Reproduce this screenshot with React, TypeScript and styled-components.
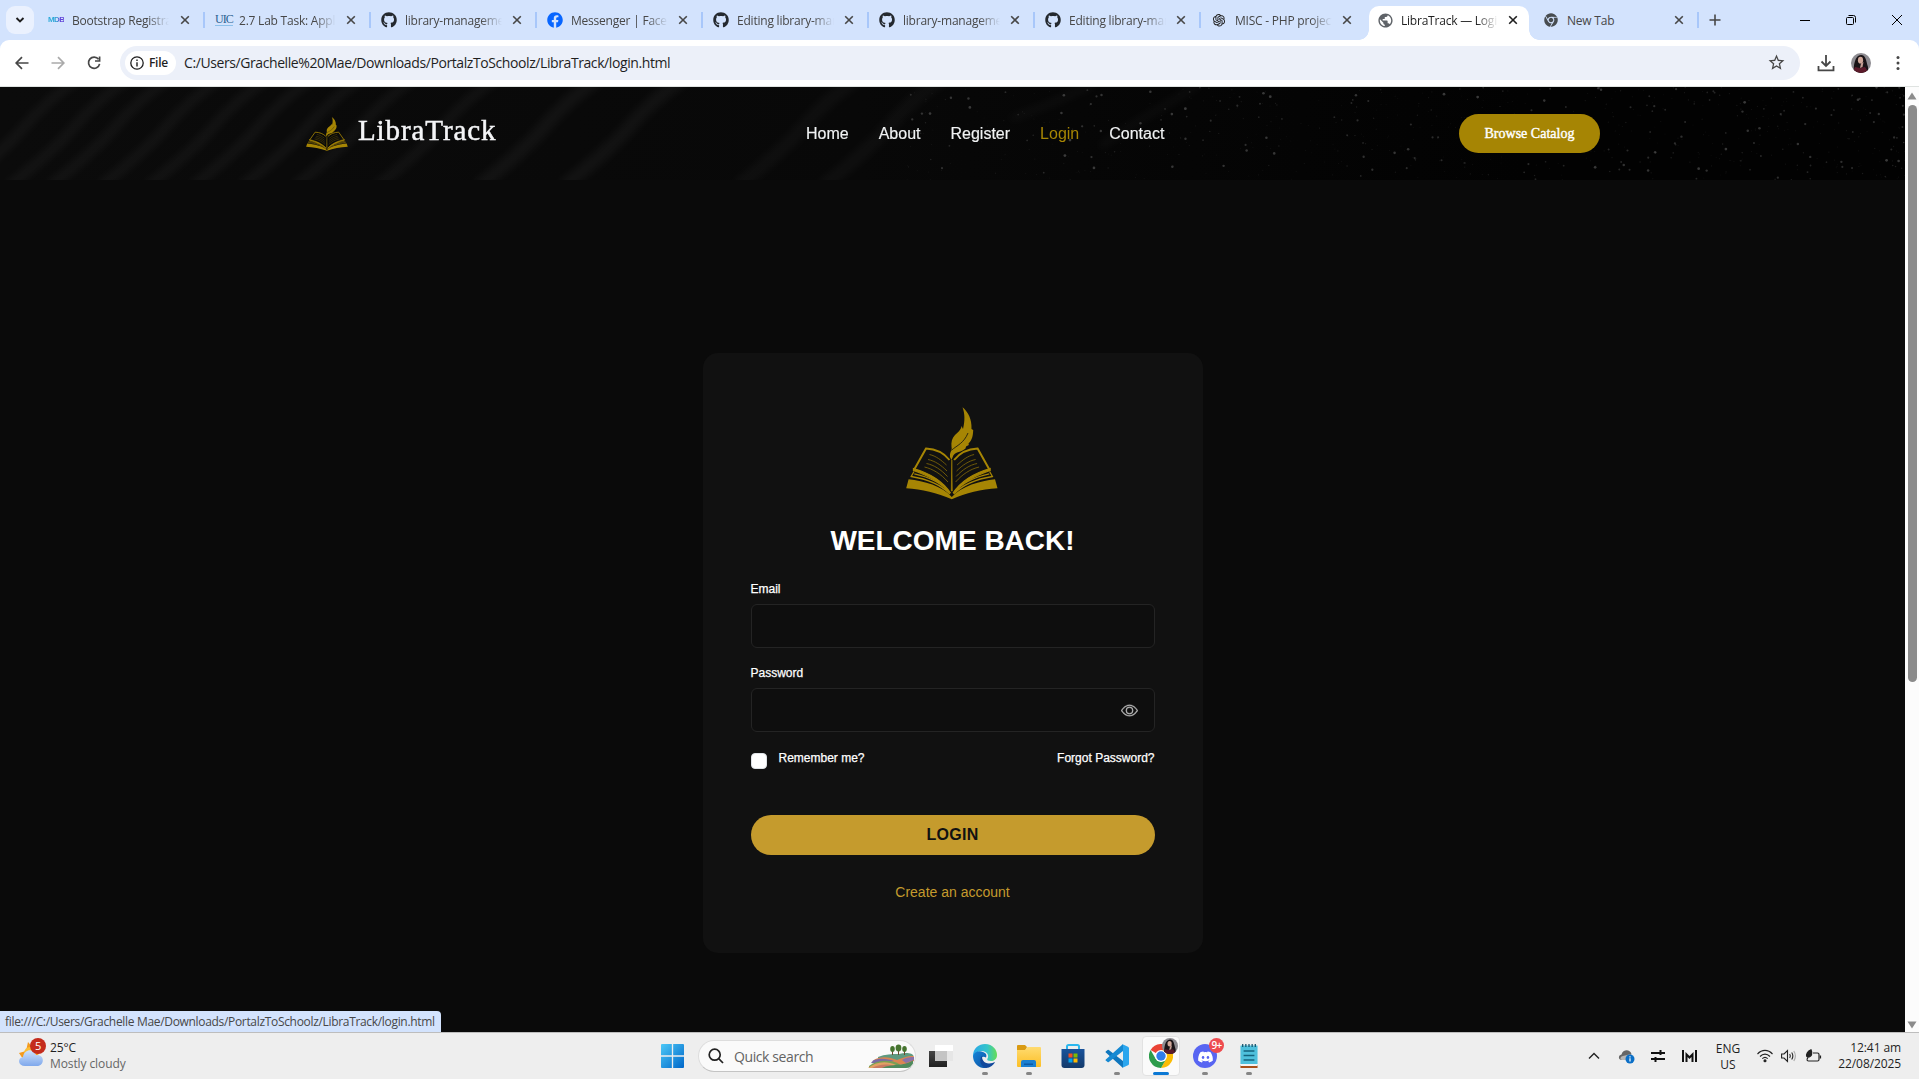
import React from "react";
import styled, { createGlobalStyle, css } from "styled-components";
import { FaGithub, FaFacebook, FaChrome, FaDiscord } from "react-icons/fa";
import { AiOutlineOpenAI } from "react-icons/ai";
import { MdPublic, MdStarBorder } from "react-icons/md";
import { BsEye } from "react-icons/bs";

const ui = `"Open Sans", "Noto Sans", sans-serif`;
const sans = `"Liberation Sans", Arial, sans-serif`;
const serif = `"Liberation Serif", "Times New Roman", serif`;
const gold = "#a68504";

const GlobalStyle = createGlobalStyle`
  * { box-sizing: border-box; }
  body { margin: 0; background: #0a0a0a; overflow: hidden; }
  svg { display: block; flex: none; }
`;

const Screen = styled.div`
  width: 1919px;
  height: 1079px;
  display: grid;
  grid-template-rows: 40px 47px 945px 47px;
  overflow: hidden;
  font-family: ${ui};
`;

/* ---------- Tab strip ---------- */
const TabStrip = styled.div`
  display: flex;
  background: #d3e3fd;
`;
const TabSearch = styled.button`
  width: 28px;
  height: 28px;
  margin: 6px 4px 0 6px;
  padding: 0;
  border: 0;
  border-radius: 9px;
  background: #eaf1fe;
  display: grid;
  place-items: center;
`;
const Tab = styled.div<{ $active?: boolean; $divider?: boolean }>`
  position: relative;
  width: 166px;
  height: 40px;
  padding: 0 13px 0 11px;
  display: flex;
  align-items: center;
  gap: 8px;
  color: ${(p) => (p.$active ? "#1f1f1f" : "#474747")};
  &:nth-child(2) {
    padding-left: 10px;
  }
  ${(p) =>
    p.$divider &&
    css`
      &::after {
        content: "";
        position: absolute;
        right: -1px;
        top: 12px;
        width: 2px;
        height: 16px;
        background: #a8c7fa;
      }
    `}
  ${(p) =>
    p.$active &&
    css`
      width: 160px;
      height: 34px;
      margin: 6px 3px 0 3px;
      padding: 0 10px 6px 8px;
      background: #fff;
      border-radius: 10px 10px 0 0;
      &::before,
      &::after {
        content: "";
        position: absolute;
        bottom: 0;
        width: 10px;
        height: 10px;
      }
      &::before {
        left: -10px;
        background: radial-gradient(circle at 0 0, transparent 9.5px, #fff 10px);
      }
      &::after {
        right: -10px;
        background: radial-gradient(circle at 100% 0, transparent 9.5px, #fff 10px);
      }
    `}
`;
const Favicon = styled.span`
  width: 16px;
  height: 16px;
  display: grid;
  place-items: center;
  flex: none;
`;
const MdbMark = styled.span`
  font: 900 8px/16px ${sans};
  letter-spacing: -0.6px;
  background: linear-gradient(90deg, #2aa9d8 0 35%, #2f8fd0 60%, #6246d8 70%);
  background-clip: text;
  -webkit-background-clip: text;
  color: transparent;
`;
const UicMark = styled.span`
  font: 400 12px/11px ${serif};
  letter-spacing: -1px;
  color: #2a6190;
  border-bottom: 1px solid #8cc0ea;
`;
const TabTitle = styled.span<{ $fade: boolean }>`
  width: 97px;
  padding-top: 1px;
  font-size: 12px;
  line-height: 18px;
  letter-spacing: -0.22px;
  white-space: nowrap;
  overflow: hidden;
  ${(p) => p.$fade && css`mask-image: linear-gradient(90deg, #000 78%, transparent);`}
`;
const CloseSlot = styled.span`
  margin-left: auto;
  width: 12px;
  display: grid;
  place-items: center;
`;
const NewTabButton = styled.span`
  width: 34px;
  display: grid;
  place-items: center;
`;
const WindowControls = styled.div`
  margin: 0 -1px 0 auto;
  display: grid;
  grid-template-columns: repeat(3, 46px);
  place-items: center;
  height: 40px;
`;

/* ---------- Toolbar ---------- */
const ToolbarBack = styled.div`
  background: linear-gradient(#d3e3fd 0 12px, #fff 12px);
`;
const Toolbar = styled.div`
  height: 47px;
  display: flex;
  align-items: center;
  padding: 0 12px 1px 12px;
  background: #fff;
  border-radius: 9px 9px 0 0;
  border-bottom: 1px solid #dfe3e1;
`;
const NavButton = styled.span`
  width: 36px;
  display: flex;
  padding-left: 1px;
`;
const Omnibox = styled.div`
  width: 1680px;
  height: 34px;
  border-radius: 17px;
  background: #ecf0f9;
  display: flex;
  align-items: center;
  padding: 0 14px 0 5px;
`;
const FileChip = styled.span`
  width: 51px;
  height: 24px;
  border-radius: 12px;
  background: #fff;
  display: flex;
  align-items: center;
  gap: 5px;
  padding-left: 5px;
  font-size: 12px;
  font-weight: 600;
  letter-spacing: -0.3px;
  color: #1f1f1f;
`;
const Url = styled.span`
  margin-left: 8px;
  font-size: 14px;
  letter-spacing: -0.41px;
  color: #1f1f1f;
  white-space: nowrap;
`;
const OmniboxEnd = styled.span`
  margin-left: auto;
`;
const ToolbarEnd = styled.div`
  margin-left: auto;
  display: flex;
  align-items: center;
  gap: 16px;
`;

/* ---------- Web page ---------- */
const Viewport = styled.main`
  position: relative;
  display: flex;
  background: #0a0a0a;
`;
const Page = styled.div`
  width: 1905px;
  display: flex;
  flex-direction: column;
  align-items: center;
`;
const SiteHeader = styled.header`
  position: relative;
  width: 100%;
  height: 93px;
  display: grid;
  grid-template-columns: 500px auto 1fr;
  align-items: center;
  padding: 0 305px 0 306px;
  background: linear-gradient(90deg, #0b0b0b, #080808 45%, #020202 80%);
`;
const HeaderTexture = styled.svg`
  position: absolute;
  inset: 0;
`;
const Brand = styled.a`
  position: relative;
  display: flex;
  align-items: flex-start;
  gap: 10px;
  padding-top: 1px;
`;
const BrandName = styled.span`
  margin-top: -2px;
  font: 400 29px/30px ${serif};
  letter-spacing: 0.9px;
  color: #f4f5f7;
  -webkit-text-stroke: 0.5px #f4f5f7;
`;
const Nav = styled.nav`
  position: relative;
  display: flex;
  gap: 30px;
`;
const NavLink = styled.a<{ $current?: boolean }>`
  font: 400 16px/24px ${sans};
  color: ${(p) => (p.$current ? gold : "#f1f3f4")};
  -webkit-text-stroke: ${(p) => (p.$current ? 0 : "0.15px #f1f3f4")};
`;
const CatalogButton = styled.button`
  position: relative;
  justify-self: end;
  width: 141px;
  height: 39px;
  border: 0;
  border-radius: 20px;
  background: ${gold};
  color: #fff;
  font: 400 14px/20px ${serif};
  letter-spacing: 0.02px;
  -webkit-text-stroke: 0.4px #fff;
  padding: 0;
`;
const Card = styled.form`
  width: 500px;
  height: 600px;
  margin-top: 173px;
  padding: 54px 48px 0;
  border-radius: 15px;
  background: #111;
  display: flex;
  flex-direction: column;
  font-family: ${sans};
`;
const CardLogo = styled.div`
  align-self: center;
  margin-right: 2px;
`;
const Title = styled.h1`
  margin: 24px 0 23px;
  text-align: center;
  font: 700 28px/34px ${sans};
  color: #fff;
`;
const Label = styled.label`
  font-size: 12px;
  line-height: 16px;
  color: #fff;
  -webkit-text-stroke: 0.25px #fff;
`;
const Field = styled.div`
  height: 44px;
  margin: 7px 0 17px;
  border: 1px solid #242424;
  border-radius: 6px;
  background: #0e0e0e;
  display: flex;
  align-items: center;
  justify-content: flex-end;
  padding-right: 16px;
`;
const OptionsRow = styled.div`
  display: flex;
  height: 20px;
  align-items: flex-start;
`;
const Checkbox = styled.span`
  width: 16px;
  height: 16px;
  margin: 4px 12px 0 0;
  border-radius: 4px;
  border: 1px solid #dee2e6;
  background: #fff;
`;
const RememberLabel = styled(Label)`
  padding-top: 1px;
`;
const ForgotLink = styled(RememberLabel)`
  margin-left: auto;
`;
const SubmitButton = styled.button`
  height: 40px;
  margin-top: 46px;
  border: 0;
  border-radius: 20px;
  background: #c59b2d;
  color: #111;
  font: 700 16px/20px ${sans};
  letter-spacing: 0.3px;
  padding: 0 0 1px;
`;
const CreateLink = styled.a`
  margin-top: 27px;
  text-align: center;
  font-size: 14px;
  line-height: 20px;
  color: #c59b2d;
`;
const Scrollbar = styled.div`
  width: 14px;
  background: #fcfcfc;
  display: flex;
  flex-direction: column;
  align-items: center;
  padding: 5px 0 3px;
`;
const ScrollThumb = styled.div`
  width: 9px;
  height: 577px;
  margin: 5px 0 auto;
  border-radius: 5px;
  background: #8b8b8b;
`;
const StatusBubble = styled.div`
  position: absolute;
  left: 0;
  bottom: 0;
  width: 441px;
  height: 21px;
  padding-left: 5px;
  border-radius: 0 4px 0 0;
  background: #d3e3fd;
  color: #474747;
  font-size: 12px;
  line-height: 21px;
  letter-spacing: -0.32px;
  white-space: nowrap;
`;

/* ---------- Taskbar ---------- */
const Taskbar = styled.footer`
  display: grid;
  grid-template-columns: 655px 1fr auto;
  background: #eee;
  border-top: 1px solid #bdbdbd;
`;
const Weather = styled.div`
  display: flex;
  gap: 3px;
  padding: 3px 0 0 17px;
  font-size: 12px;
  line-height: 16px;
  letter-spacing: -0.1px;
  color: #666;
`;
const Temperature = styled.div`
  color: #1f1f1f;
  padding-top: 4px;
`;
const Apps = styled.div`
  display: flex;
  align-items: center;
`;
const StartSlot = styled.span`
  width: 43px;
  padding-left: 6px;
`;
const SearchBox = styled.div`
  width: 218px;
  height: 32px;
  margin-right: 3px;
  border-radius: 16px;
  border: 1px solid #ddd;
  border-bottom-color: #c4c4c4;
  background: #fafafa;
  display: flex;
  align-items: center;
  padding: 0 1px 0 9px;
  font-size: 14px;
  letter-spacing: -0.4px;
  color: #636363;
  overflow: hidden;
`;
const SearchText = styled.span`
  margin: 0 auto 0 10px;
`;
const AppSlot = styled.span<{ $focused?: boolean; $running?: boolean }>`
  position: relative;
  width: 38px;
  height: 40px;
  margin: 0 3px;
  border-radius: 4px;
  display: grid;
  place-items: center;
  ${(p) => p.$focused && css`background: #fafafa; border: 1px solid #e2e2e2;`}
  ${(p) =>
    (p.$focused || p.$running) &&
    css`
      &::after {
        content: "";
        position: absolute;
        bottom: ${p.$focused ? 0 : 1}px;
        left: 50%;
        width: ${p.$focused ? 16 : 6}px;
        height: 3px;
        transform: translateX(-50%);
        border-radius: 2px;
        background: ${p.$focused ? "#0b78d4" : "#858585"};
      }
    `}
`;
const CountBadge = styled.span`
  position: absolute;
  right: 0;
  top: 2px;
  width: 15px;
  height: 15px;
  border-radius: 50%;
  background: #ee4b4f;
  color: #fff;
  font-size: 10px;
  font-weight: 600;
  line-height: 15px;
  letter-spacing: -0.6px;
  text-align: center;
`;
const AvatarBadge = styled.span`
  position: absolute;
  right: 1px;
  top: 1px;
`;
const Tray = styled.div`
  display: flex;
  align-items: center;
  padding-right: 18px;
  font-size: 12px;
  line-height: 16px;
  color: #1f1f1f;
`;
const TrayIcon = styled.span<{ $w: number }>`
  width: ${(p) => p.$w}px;
  display: grid;
  place-items: center;
`;
const Language = styled.div`
  width: 40px;
  margin: 1px 5px 0 3px;
  text-align: center;
`;
const Clock = styled.div`
  width: 76px;
  letter-spacing: -0.1px;
  text-align: right;
  white-space: nowrap;
`;

/* ---------- Drawings ---------- */
const BookSide = () => (
  <g fill="none" stroke={gold}>
    <path d="M43.500 53C38 46 30 42 20 41.500L8.500 62" strokeWidth="2" />
    <path d="M7.500 61.500C23 66 36 73 44.500 86C36 75.500 23 69 7.500 63.500Z" strokeWidth="1.300" fill={gold} />
    <path d="M8 64.500L5.200 69.500C21 72 34 77 44 87M8.300 66.800C23 70 35 75 43.500 85.500" strokeWidth="1.300" />
    <g strokeWidth=".9" opacity=".7">
      <path d="M23.500 47.500C30 49 35 53 40.500 58" />
      <path d="M22 52.500C29 54 35 58 41 64" />
      <path d="M20.500 56.500C28 58 35 62.500 41.500 69.500" />
      <path d="M18.500 60C27 62 35 67 42 75" />
    </g>
  </g>
);

const BookLogo = ({ width, height }: { width: number; height: number }) => (
  <svg width={width} height={height} viewBox="0 0 92 93" preserveAspectRatio="none">
    <path
      fill={gold}
      d="M2.600 72.300C18 74 36 79 45.800 90C56 79 74 74 89 72.300L91.500 81.300C75 82 60 86 45.800 92.300C31 86 16 82.500 .2 81.300Z"
    />
    <BookSide />
    <g transform="matrix(-1 0 0 1 91.6 0)">
      <BookSide />
    </g>
    <path d="M45.800 53L46.300 84H45.300Z" stroke={gold} strokeWidth=".6" fill={gold} />
    <path
      fill={gold}
      d="M56.500 .3C62 5 66 12 65.500 22L67.200 23C67 31 65 34 62.500 36.500L62.800 38L60 39.500L59.500 41.500C55 45.500 50 44.500 47.300 48.500L45.500 53L44 50C43.500 45 46.500 43.500 45.500 40C45 35 46 31 49 28C52 25 55 23 55.500 19L57 22C59 14 59 7 56.500 .3Z"
    />
    <path d="M45.500 43.200C51 38.500 58 36 62 26" stroke="#111" strokeWidth=".8" fill="none" />
  </svg>
);

const Avatar = ({ w, h }: { w: number; h: number }) => (
  <svg width={w} height={h} viewBox="0 0 20 20" preserveAspectRatio="none">
    <clipPath id={`face${w}`}><circle cx="10" cy="10" r="10" /></clipPath>
    <g clipPath={`url(#face${w})`}>
      <path fill="#8d8b90" d="M0 0H20V20H0Z" />
      <path fill="#191316" d="M3 20C2 13 4 2 10 2C15 2 15 8 17 14L17 20Z" />
      <ellipse cx="9.500" cy="7.200" rx="2.600" ry="3.400" fill="#cfa799" />
      <path fill="#5b1a2a" d="M1 20L4 14L9 15L14 14L18 20Z" />
      <path fill="#c69f94" d="M10 10.500L12.500 9L11.500 14L9 15Z" />
    </g>
  </svg>
);

const CloseIcon = ({ dark }: { dark?: boolean }) => (
  <svg width="10" height="10" viewBox="0 0 10 10">
    <path d="M1.200 1.200L8.800 8.800M8.800 1.200L1.200 8.800" stroke={dark ? "#1f1f1f" : "#474747"} strokeWidth="1.600" />
  </svg>
);

const stripes = [-34, 16, 57, 108, 155, 200, 249, 302, 384, 486, 571, 745, 830];
const specks = Array.from({ length: 700 }, (_, i) => {
  const a = Math.abs(Math.sin(i * 12.9898 + 4.1) * 43758.5453) % 1;
  const b = Math.abs(Math.sin(i * 78.233 + 1.7) * 24634.6345) % 1;
  const c = Math.abs(Math.sin(i * 39.425 + 9.2) * 14375.8512) % 1;
  const c4 = c * c * c * c;
  return { x: 1905 - Math.pow(a, 1.4) * 1000, y: b * 93, r: 0.5 + c4 * 0.9, o: 0.06 + c4 * 0.16 };
});

const Texture = () => (
  <HeaderTexture width="1905" height="93">
    <defs>
      <filter id="soft" x="-20%" y="-20%" width="140%" height="140%">
        <feGaussianBlur stdDeviation="4" />
      </filter>
    </defs>
    <g filter="url(#soft)" stroke="#fff" fill="none">
      {stripes.map((x, i) => (
        <path
          key={x}
          d={`M${x - 8} 100Q${x + 40} 62 ${x + 60} 38T${x + 112} -8`}
          strokeWidth={i > 8 ? 14 : 10}
          opacity={i > 10 ? 0.03 : 0.045}
        />
      ))}
      <path d="M1010 32C1050 18 1070 8 1095 -4M1100 60C1140 30 1170 18 1200 -4" strokeWidth="8" opacity=".03" />
    </g>
    {specks.map((s, i) => (
      <circle key={i} cx={s.x} cy={s.y} r={s.r} fill="#fff" opacity={s.o} />
    ))}
  </HeaderTexture>
);

const WeatherIcon = () => (
  <svg width="30" height="34" viewBox="0 0 30 34">
    <path fill="#f49a1c" d="M2 17L9 15L11 6L17 13L22 18L8 26Z" />
    <circle cx="13" cy="17" r="6" fill="#fbbd35" />
    <linearGradient id="cloud" x2="0" y2="1"><stop stopColor="#cfe2fb" /><stop offset="1" stopColor="#7fa8ec" /></linearGradient>
    <path fill="url(#cloud)" d="M8 30C1 30 0 22 6 21C7 13 17 12 19 19C28 18 28 30 20 30Z" />
    <circle cx="21" cy="10" r="8" fill="#c42b1c" />
    <text x="21" y="14" textAnchor="middle" fontSize="11" fill="#fff" fontFamily="Open Sans">5</text>
  </svg>
);

const StartIcon = () => (
  <svg width="23" height="24" viewBox="0 0 24 24" preserveAspectRatio="none">
    <linearGradient id="win" x2="1" y2="1"><stop stopColor="#4cc8f7" /><stop offset="1" stopColor="#0067c9" /></linearGradient>
    <path fill="url(#win)" d="M0 1Q0 0 1 0H11.300V11.300H0ZM12.700 0H23Q24 0 24 1V11.300H12.700ZM0 12.700H11.300V24H1Q0 24 0 23ZM12.700 12.700H24V23Q24 24 23 24H12.700Z" />
  </svg>
);

const Landscape = () => (
  <svg width="46" height="26" viewBox="0 0 46 26">
    <path fill="#5f9a80" d="M10 14C17 11 24 11 31 11C38 9 45 10 45.500 13L40 20L10 20Z" />
    <path fill="#d98552" d="M5 17.500C12 12.500 22 14 29 17C36 14 43 12 46 13.500V18L39 22L12 21Z" />
    <path fill="#7a6aa5" d="M5 17.500C12 14.500 20 16 26 18L18 20L3 20Z" />
    <path fill="#8a72a8" d="M34 17C39 14 43 14 46 14V17L38 20Z" />
    <path fill="#79a055" d="M1 23C10 16 24 17 31 21L38 25H1Z" />
    <path fill="#e2a165" d="M0 25C7 19 18 17 28 22L33 25Z" />
    <path fill="#c97b62" d="M4 25C10 22 18 20 26 23L30 25Z" />
    <path fill="#4f8a5c" d="M14 25C24 20 34 24 45 17.500V22Q43 25 38 25Z" />
    <path stroke="#6b4a2b" d="M24.500 6V12M30.500 5V12M36.500 6V12" />
    <g fill="#46742f">
      <ellipse cx="24.500" cy="6" rx="2.300" ry="3" />
      <ellipse cx="30.500" cy="5" rx="2.900" ry="3.400" />
      <ellipse cx="36.500" cy="6" rx="2.300" ry="3" />
    </g>
  </svg>
);

const TaskViewIcon = () => (
  <svg width="24" height="24" viewBox="0 0 24 24">
    <linearGradient id="tv" x2="0" y2="1"><stop stopColor="#454545" /><stop offset="1" stopColor="#202020" /></linearGradient>
    <path fill="url(#tv)" d="M0 7H18V23H0Z" />
    <path fill="#fff" d="M6 1H24V17H6Z" opacity=".95" />
    <path fill="#c4c4c4" d="M6 7H18V17H6Z" />
    <path fill="#e6e6e6" d="M18 7H24V17H18Z" />
  </svg>
);

const EdgeIcon = () => (
  <svg width="24" height="24" viewBox="0 0 24 24">
    <linearGradient id="e1" x2="1"><stop stopColor="#2aa7e8" /><stop offset=".6" stopColor="#35c5c9" /><stop offset="1" stopColor="#66dd55" /></linearGradient>
    <linearGradient id="e2" x2="1" y2="1"><stop stopColor="#1684d8" /><stop offset="1" stopColor="#0c4fa0" /></linearGradient>
    <path fill="url(#e1)" d="M0 12C0 4 6 0 12 0C20 0 24 6 24 11C24 15 21 17 18 17C15 17 13.800 16 14.300 15C17 11 13 7 9 7C4 7 1 10 0 14Z" />
    <path fill="url(#e2)" d="M0 12C1 8 6 6 10 8C13 9 14 11 13 13.500C8 11 6 16 9 20C11 23 14 24 15 23.600C6 26 0 19 0 12Z" />
    <path fill="#11489b" d="M9.500 11.500C8 15 11 19.500 16 19.500C19 19.500 20 18.500 22 18C21 20.500 17 24 13 24C7 22 5 15 9.500 11.500Z" />
  </svg>
);

const FolderIcon = () => (
  <svg width="24" height="24" viewBox="0 0 24 24">
    <path fill="#d99a12" d="M0 2Q0 1 1 1H8L10 3L8 7H0Z" />
    <linearGradient id="fol" x2="0" y2="1"><stop stopColor="#ffdb70" /><stop offset="1" stopColor="#fcbf26" /></linearGradient>
    <path fill="url(#fol)" d="M0 6H8L10.500 3H23Q24 3 24 4V22Q24 23 23 23H1Q0 23 0 22Z" />
    <path fill="#1b7fd0" d="M4 23V18Q4 16 6 16H17Q19 16 19 18V23Z" />
    <path fill="#0b5aa6" d="M7 19.500H16V21H7Z" />
  </svg>
);

const StoreIcon = () => (
  <svg width="24" height="24" viewBox="0 0 24 24">
    <path fill="none" stroke="#2bb7ee" strokeWidth="2" d="M6 6V2.500Q6 1 7.500 1H16.500Q18 1 18 2.500V6" />
    <linearGradient id="sto" x2="0" y2="1"><stop stopColor="#19539b" /><stop offset="1" stopColor="#133a6b" /></linearGradient>
    <path fill="url(#sto)" d="M.5 5H23.500V21Q23.500 24 20.500 24H3.500Q.5 24 .5 21Z" />
    <path fill="#f25022" d="M7.500 9.500H11.500V13.500H7.500Z" />
    <path fill="#7fba00" d="M12.500 9.500H16.500V13.500H12.500Z" />
    <path fill="#00a4ef" d="M7.500 14.500H11.500V18.500H7.500Z" />
    <path fill="#ffb900" d="M12.500 14.500H16.500V18.500H12.500Z" />
  </svg>
);

const CodeIcon = () => (
  <svg width="24" height="24" viewBox="0 0 24 24">
    <path fill="#0f76bd" d="M1 7.200L2.600 5.900Q3.200 5.500 3.800 6L18 17V24L.8 8.600Q0 7.900 1 7.200Z" />
    <path fill="#1689d2" d="M1 16.800L2.600 18.100Q3.200 18.500 3.800 18L18 7V0L.8 15.400Q0 16.100 1 16.800Z" />
    <path fill="#2ba6ee" d="M17.500 .2L23 2.700Q24 3.200 24 4.200V19.800Q24 20.800 23 21.300L17.500 23.800Q18 23.500 18 22.500V1.500Q18 .5 17.500 .2Z" />
  </svg>
);

const ChromeIcon = () => (
  <svg width="24" height="24" viewBox="0 0 24 24">
    <path fill="#ea4335" d="M12 12L1.600 6A12 12 0 0 1 22.400 6Z" />
    <path fill="#fbbc04" d="M12 6H22.400A12 12 0 0 1 12 24L17.200 15Z" />
    <path fill="#2d9c4b" d="M1.600 6L6.800 15L12 18L17.200 15L12 24A12 12 0 0 1 1.600 6Z" />
    <circle cx="12" cy="12" r="6" fill="#fff" />
    <circle cx="12" cy="12" r="4.700" fill="#2f7de9" />
  </svg>
);

const DiscordIcon = () => (
  <svg width="24" height="24" viewBox="0 0 24 24">
    <circle cx="12" cy="12" r="12" fill="#5865f2" />
    <FaDiscord x="4.500" y="5" width="15" height="14" color="#fff" />
  </svg>
);

const NotepadIcon = () => (
  <svg width="18" height="24" viewBox="0 0 20 24" preserveAspectRatio="none">
    <path fill="#a9501a" d="M.5 21H19.500V24H.5Z" />
    <path fill="#f3f3f3" d="M.5 19H19.500V22H.5Z" />
    <path fill="#4fc0dc" d="M1 1.500H19Q19.500 1.500 19.500 2.500V20H.5V2.500Q.5 1.500 1 1.500Z" />
    <path stroke="#15526b" strokeWidth="1.400" d="M3 0V3M6.500 0V3M10 0V3M13.500 0V3M17 0V3" />
    <path stroke="#14637e" strokeWidth="1.500" d="M4 7H16M4 11.500H16M4 16H16" />
  </svg>
);

const tabs = [
  { icon: <MdbMark>MDB</MdbMark>, title: "Bootstrap Registration" },
  { icon: <UicMark>UIC</UicMark>, title: "2.7 Lab Task: Applied" },
  { icon: <FaGithub size={16} color="#24292f" />, title: "library-management" },
  { icon: <FaFacebook size={16} color="#0866ff" />, title: "Messenger | Facebook" },
  { icon: <FaGithub size={16} color="#24292f" />, title: "Editing library-mana" },
  { icon: <FaGithub size={16} color="#24292f" />, title: "library-management" },
  { icon: <FaGithub size={16} color="#24292f" />, title: "Editing library-mana" },
  { icon: <AiOutlineOpenAI size={16} color="#222" />, title: "MISC - PHP project" },
  { icon: <MdPublic size={17} color="#5f6368" />, title: "LibraTrack — Login", active: true },
  { icon: <FaChrome size={14} color="#474c50" />, title: "New Tab" },
];

export default function App() {
  return (
    <Screen>
      <GlobalStyle />
      <TabStrip>
        <TabSearch>
          <svg width="10" height="8" viewBox="0 0 10 8"><path d="M1.500 2L5 5.500L8.500 2" fill="none" stroke="#1f1f1f" strokeWidth="1.900" /></svg>
        </TabSearch>
        {tabs.map((t, i) => (
          <Tab key={i} $active={t.active} $divider={i !== 7 && i !== 8}>
            <Favicon>{t.icon}</Favicon>
            <TabTitle $fade={t.title !== "New Tab"}>{t.title}</TabTitle>
            <CloseSlot><CloseIcon dark={t.active} /></CloseSlot>
          </Tab>
        ))}
        <NewTabButton>
          <svg width="12" height="12" viewBox="0 0 12 12"><path d="M6 .5V11.500M.5 6H11.500" stroke="#474747" strokeWidth="1.600" /></svg>
        </NewTabButton>
        <WindowControls>
          <svg width="10" height="10"><path d="M0 5.500H10" stroke="#000" /></svg>
          <svg width="10" height="10" fill="none" stroke="#000">
            <rect x=".5" y="2.500" width="7" height="7" rx="1" />
            <path d="M2.500 .5H7.500Q9.500 .5 9.500 2.500V7.500" />
          </svg>
          <svg width="10" height="10"><path d="M0 0L10 10M10 0L0 10" stroke="#000" /></svg>
        </WindowControls>
      </TabStrip>

      <ToolbarBack>
        <Toolbar>
          <NavButton>
            <svg width="18" height="18" viewBox="0 0 18 18"><path d="M15.500 9H3.500M9 3.200L3.200 9L9 14.800" fill="none" stroke="#474747" strokeWidth="1.700" /></svg>
          </NavButton>
          <NavButton>
            <svg width="18" height="18" viewBox="0 0 18 18"><path d="M2.500 9H14.500M9 3.200L14.800 9L9 14.800" fill="none" stroke="#aaa" strokeWidth="1.700" /></svg>
          </NavButton>
          <NavButton>
            <svg width="18" height="18" viewBox="0 0 18 18">
              <path d="M13.600 5.300A5.600 5.600 0 1 0 14.600 9.800" fill="none" stroke="#474747" strokeWidth="1.700" />
              <path d="M14.600 2.500V7H10" fill="none" stroke="#474747" strokeWidth="1.700" />
            </svg>
          </NavButton>
          <Omnibox>
            <FileChip>
              <svg width="14" height="14" viewBox="0 0 14 14">
                <circle cx="7" cy="7" r="6.200" fill="none" stroke="#1f1f1f" strokeWidth="1.300" />
                <path d="M7 6.300V10.500M7 3.500V5" stroke="#1f1f1f" strokeWidth="1.400" />
              </svg>
              File
            </FileChip>
            <Url>C:/Users/Grachelle%20Mae/Downloads/PortalzToSchoolz/LibraTrack/login.html</Url>
            <OmniboxEnd><MdStarBorder size={19} color="#474747" /></OmniboxEnd>
          </Omnibox>
          <ToolbarEnd>
            <svg width="18" height="18" viewBox="0 0 18 18">
              <path d="M9 1V11.500M4.500 7.500L9 12L13.500 7.500M1.500 12V16.300H16.500V12" fill="none" stroke="#474747" strokeWidth="1.800" />
            </svg>
            <Avatar w={20} h={20} />
            <svg width="20" height="16" viewBox="0 0 20 16" fill="#474747">
              <circle cx="11" cy="2.500" r="1.500" /><circle cx="11" cy="8" r="1.500" /><circle cx="11" cy="13.500" r="1.500" />
            </svg>
          </ToolbarEnd>
        </Toolbar>
      </ToolbarBack>

      <Viewport>
        <Page>
          <SiteHeader>
            <Texture />
            <Brand>
              <BookLogo width={42} height={34} />
              <BrandName>LibraTrack</BrandName>
            </Brand>
            <Nav>
              {["Home", "About", "Register", "Login", "Contact"].map((n) => (
                <NavLink key={n} $current={n === "Login"}>{n}</NavLink>
              ))}
            </Nav>
            <CatalogButton>Browse Catalog</CatalogButton>
          </SiteHeader>
          <Card>
            <CardLogo><BookLogo width={92} height={93} /></CardLogo>
            <Title>WELCOME BACK!</Title>
            <Label>Email</Label>
            <Field />
            <Label>Password</Label>
            <Field><BsEye size={17} color="#b5b5b5" stroke="#b5b5b5" strokeWidth={0.25} /></Field>
            <OptionsRow>
              <Checkbox />
              <RememberLabel>Remember me?</RememberLabel>
              <ForgotLink>Forgot Password?</ForgotLink>
            </OptionsRow>
            <SubmitButton type="button">LOGIN</SubmitButton>
            <CreateLink>Create an account</CreateLink>
          </Card>
        </Page>
        <Scrollbar>
          <svg width="10" height="8"><path d="M5 .5L9.500 7.500H.5Z" fill="#8b8b8b" /></svg>
          <ScrollThumb />
          <svg width="10" height="8"><path d="M5 7.500L9.500 .5H.5Z" fill="#8b8b8b" /></svg>
        </Scrollbar>
        <StatusBubble>file:///C:/Users/Grachelle Mae/Downloads/PortalzToSchoolz/LibraTrack/login.html</StatusBubble>
      </Viewport>

      <Taskbar>
        <Weather>
          <WeatherIcon />
          <div>
            <Temperature>25°C</Temperature>
            <div>Mostly cloudy</div>
          </div>
        </Weather>
        <Apps>
          <StartSlot><StartIcon /></StartSlot>
          <SearchBox>
            <svg width="16" height="16" viewBox="0 0 16 16" fill="none" stroke="#222" strokeWidth="1.700">
              <circle cx="6.700" cy="6.700" r="5.500" /><path d="M10.700 10.700L15 15" />
            </svg>
            <SearchText>Quick search</SearchText>
            <Landscape />
          </SearchBox>
          <AppSlot><TaskViewIcon /></AppSlot>
          <AppSlot $running><EdgeIcon /></AppSlot>
          <AppSlot $running><FolderIcon /></AppSlot>
          <AppSlot><StoreIcon /></AppSlot>
          <AppSlot $running><CodeIcon /></AppSlot>
          <AppSlot $focused><ChromeIcon /><AvatarBadge><Avatar w={16} h={16} /></AvatarBadge></AppSlot>
          <AppSlot $running><DiscordIcon /><CountBadge>9+</CountBadge></AppSlot>
          <AppSlot $running><NotepadIcon /></AppSlot>
        </Apps>
        <Tray>
          <TrayIcon $w={32}>
            <svg width="12" height="8" fill="none" stroke="#222" strokeWidth="1.400"><path d="M1 6.500L6 1.500L11 6.500" /></svg>
          </TrayIcon>
          <TrayIcon $w={32}>
            <svg width="17" height="16" viewBox="0 0 17 16">
              <path fill="#666" d="M4 12C0 12 0 7 3.500 6.500C5 1 12 1 13.500 6L8 12Z" />
              <path fill="#b5b5b5" d="M4 12C1 11 3 8 5 8L13 6L8 12Z" />
              <circle cx="12" cy="11" r="4.500" fill="#0b6fc7" />
              <path d="M12 10.300V13.500M12 8.200V9.400" stroke="#fff" strokeWidth="1.200" />
            </svg>
          </TrayIcon>
          <TrayIcon $w={32}>
            <svg width="14" height="12" stroke="#111" strokeWidth="2"><path d="M0 3H14M0 9H14M9.500 0V5M4.500 7V12" /></svg>
          </TrayIcon>
          <TrayIcon $w={31}>
            <svg width="15" height="12" viewBox="0 0 15 12" fill="#111">
              <path d="M0 0H2V12H0ZM13 0H15V12H13ZM3.500 2L7.500 6L11.500 2V12H9.500V7L7.500 9L5.500 7V12H3.500Z" />
            </svg>
          </TrayIcon>
          <Language>ENG<br />US</Language>
          <TrayIcon $w={24}>
            <svg width="16" height="14" viewBox="0 0 16 14" fill="none" stroke="#222" strokeWidth="1.100">
              <path d="M.5 5C5 .2 11 .2 15.500 5M3 7.500C6 4.300 10 4.300 13 7.500M5.300 9.700C7 8 9 8 10.700 9.700" />
              <circle cx="8" cy="11.800" r="1" fill="#222" />
            </svg>
          </TrayIcon>
          <TrayIcon $w={24}>
            <svg width="16" height="14" viewBox="0 0 16 14" fill="none" stroke="#222" strokeWidth="1.100">
              <path d="M.6 5H3L6.500 1.500V12.500L3 9H.6ZM8.700 5Q10 7 8.700 9M10.700 3.500Q13 7 10.700 10.500" />
              <path d="M12.800 2Q16 7 12.800 12" stroke="#aaa" />
            </svg>
          </TrayIcon>
          <TrayIcon $w={24}>
            <svg width="17" height="14" viewBox="0 0 17 14" fill="none" stroke="#222" strokeWidth="1.200">
              <path d="M8 4H12.500Q14 4 14 5.500V10.500Q14 12 12.500 12H3.500Q2 12 2 10.500M15.500 6.500V9.500" />
              <path d="M2 8C.5 5 3 2 6 .8C7.500 4 7 8 3 8M2 10.500L3.500 7" fill="#222" />
            </svg>
          </TrayIcon>
          <Clock>12:41 am<br />22/08/2025</Clock>
        </Tray>
      </Taskbar>
    </Screen>
  );
}
